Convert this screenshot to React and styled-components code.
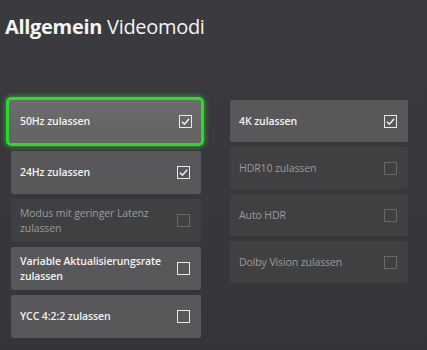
import React from 'react';
import styled, { createGlobalStyle } from 'styled-components';

const GlobalStyle = createGlobalStyle`
  html, body {
    margin: 0;
    padding: 0;
    background: #38373b;
  }
  body {
    font-family: "Open Sans", "Noto Sans", sans-serif;
  }
`;

const leftItems = [
  { label: '50Hz zulassen', checked: true, focused: true },
  { label: '24Hz zulassen', checked: true },
  { label: 'Modus mit geringer Latenz zulassen', disabled: true },
  { label: 'Variable Aktualisierungsrate zulassen' },
  { label: 'YCC 4:2:2 zulassen' },
];

const rightItems = [
  { label: '4K zulassen', checked: true },
  { label: 'HDR10 zulassen', disabled: true },
  { label: 'Auto HDR', disabled: true },
  { label: 'Dolby Vision zulassen', disabled: true },
];

const Check = ({ checked, disabled }) => (
  <Box disabled={disabled}>
    {checked && (
      <svg width="11" height="11" viewBox="0 0 11 11">
        <path d="M2 5.8 L4.4 8.2 L9.2 2.8" fill="none" stroke="#f4f4f4" strokeWidth="1.4" />
      </svg>
    )}
  </Box>
);

const Setting = ({ label, checked, disabled, focused, compact }) => (
  <Tile disabled={disabled} focused={focused} compact={compact}>
    <Label disabled={disabled}>{label}</Label>
    <Check checked={checked} disabled={disabled} />
  </Tile>
);

export default function App() {
  return (
    <>
      <GlobalStyle />
      <Screen>
        <Title>
          <b>Allgemein</b> Videomodi
        </Title>
        <Columns>
          <Column>
            {leftItems.map((it) => (
              <Setting key={it.label} {...it} />
            ))}
          </Column>
          <Column>
            {rightItems.map((it) => (
              <Setting key={it.label} compact {...it} />
            ))}
          </Column>
        </Columns>
      </Screen>
    </>
  );
}

const Screen = styled.div`
  width: 427px;
  height: 350px;
  box-sizing: border-box;
  padding: 13px 0 0 0;
  background: linear-gradient(180deg, #3b3a3e 0%, #38373b 60%, #353438 100%);
  overflow: hidden;
`;

const Title = styled.h1`
  margin: 0 0 0 5px;
  font-size: 20px;
  font-weight: 400;
  color: #f4f4f4;
  letter-spacing: -0.3px;
  line-height: 28px;

  b {
    font-weight: 700;
  }
`;

const Columns = styled.div`
  display: grid;
  grid-template-columns: 190px 178px;
  column-gap: 29px;
  margin: 59px 0 0 11px;
  align-items: start;
`;

const Column = styled.div`
  display: flex;
  flex-direction: column;
  gap: 5px;
`;

const Tile = styled.div`
  box-sizing: border-box;
  height: ${(p) => (p.compact ? 42 : 43)}px;
  display: flex;
  align-items: center;
  justify-content: space-between;
  padding: 0 11px 0 9px;
  border-radius: 2px;
  background: ${(p) => (p.disabled ? '#404043' : '#58585a')};

  ${(p) =>
    p.focused &&
    `
    margin: -3px -3px 0 -5px;
    height: 49px;
    padding: 0 9px 0 11px;
    background: linear-gradient(180deg, #6c6c6c 0%, #636363 100%);
    border: 3px solid #2fd82c;
    border-radius: 5px;
    box-shadow: 0 0 5px 1px rgba(50, 220, 50, 0.55);
  `}
`;

const Label = styled.span`
  max-width: 150px;
  font-size: 10.5px;
  line-height: 15px;
  letter-spacing: -0.1px;
  font-weight: ${(p) => (p.disabled ? 400 : 600)};
  color: ${(p) => (p.disabled ? '#9b9b9d' : '#f2f2f2')};
`;

const Box = styled.div`
  box-sizing: border-box;
  width: 13px;
  height: 13px;
  flex-shrink: 0;
  display: flex;
  align-items: center;
  justify-content: center;
  border: 1.5px solid ${(p) => (p.disabled ? '#68686b' : '#e8e8e8')};
`;
